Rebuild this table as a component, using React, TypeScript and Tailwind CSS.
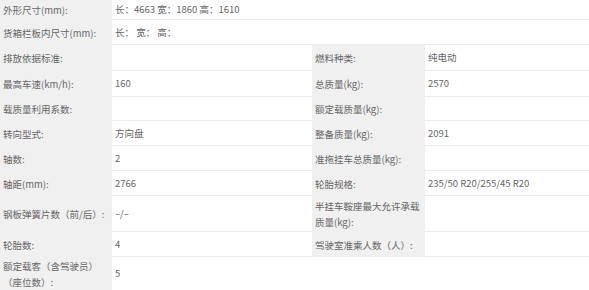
type Pair = { label: string; value?: string };

type Row = {
  h: string;
  left: Pair;
  right?: Pair;
};

const rows: Row[] = [
  { h: "h-[20px]", left: { label: "外形尺寸(mm):", value: "长：4663 宽：1860 高：1610" } },
  { h: "h-[25px]", left: { label: "货箱栏板内尺寸(mm):", value: "长： 宽： 高：" } },
  { h: "h-[26px]", left: { label: "排放依据标准:" }, right: { label: "燃料种类:", value: "纯电动" } },
  { h: "h-[26px]", left: { label: "最高车速(km/h):", value: "160" }, right: { label: "总质量(kg):", value: "2570" } },
  { h: "h-[24px]", left: { label: "载质量利用系数:" }, right: { label: "额定载质量(kg):" } },
  { h: "h-[25px]", left: { label: "转向型式:", value: "方向盘" }, right: { label: "整备质量(kg):", value: "2091" } },
  { h: "h-[25px]", left: { label: "轴数:", value: "2" }, right: { label: "准拖挂车总质量(kg):" } },
  { h: "h-[25px]", left: { label: "轴距(mm):", value: "2766" }, right: { label: "轮胎规格:", value: "235/50 R20/255/45 R20" } },
  { h: "h-[36px]", left: { label: "钢板弹簧片数（前/后）:", value: "–/–" }, right: { label: "半挂车鞍座最大允许承载质量(kg):" } },
  { h: "h-[25px]", left: { label: "轮胎数:", value: "4" }, right: { label: "驾驶室准乘人数（人）:" } },
  { h: "h-[33px]", left: { label: "额定载客（含驾驶员）（座位数）:", value: "5" } },
];

function Label({ text, w }: { text: string; w: string }) {
  return (
    <div className={`${w} shrink-0 bg-[#f0f0f0] flex items-center pl-[3px] pr-[4px] leading-[16px]`}>
      <span>{text}</span>
    </div>
  );
}

function Value({ text, w }: { text?: string; w: string }) {
  return (
    <div className={`${w} flex items-center pl-[3px] border-b border-[#ececec] bg-white`}>
      <span className="whitespace-pre">{text}</span>
    </div>
  );
}

export default function App() {
  return (
    <div
      className="w-[589px] h-[290px] overflow-hidden bg-white text-[9.5px] text-[#666]"
      style={{ fontFamily: '"Noto Sans CJK SC", "Noto Sans", sans-serif' }}
    >
      {rows.map((r, i) => (
        <div key={i} className={`flex ${r.h}`}>
          <Label text={r.left.label} w="w-[112px]" />
          {r.right ? (
            <>
              <Value text={r.left.value} w="w-[200px] shrink-0" />
              <Label text={r.right.label} w="w-[113px]" />
              <Value text={r.right.value} w="flex-1" />
            </>
          ) : (
            <Value text={r.left.value} w={i === rows.length - 1 ? "flex-1 !border-b-0" : "flex-1"} />
          )}
        </div>
      ))}
    </div>
  );
}
